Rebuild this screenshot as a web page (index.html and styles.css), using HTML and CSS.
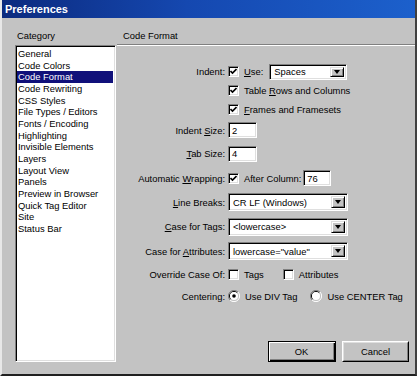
FILE: index.html
```html
<!DOCTYPE html>
<html>
<head>
<meta charset="utf-8">
<link rel="stylesheet" href="styles.css">
</head>
<body>
<div class="window">
  <div class="titlebar">Preferences</div>
  <div class="main">
    <div class="cat-col">
      <div class="cat-label">Category</div>
      <ul class="listbox">
        <li>General</li>
        <li>Code Colors</li>
        <li class="sel">Code Format</li>
        <li>Code Rewriting</li>
        <li>CSS Styles</li>
        <li>File Types / Editors</li>
        <li>Fonts / Encoding</li>
        <li>Highlighting</li>
        <li>Invisible Elements</li>
        <li>Layers</li>
        <li>Layout View</li>
        <li>Panels</li>
        <li>Preview in Browser</li>
        <li>Quick Tag Editor</li>
        <li>Site</li>
        <li>Status Bar</li>
      </ul>
    </div>
    <div class="panel">
      <div class="panel-head">Code Format</div>
      <div class="form">
        <div class="lbl r1"><span>Indent:</span></div>
        <div class="ctl r1">
          <span class="chk on"><svg viewBox="0 0 7 7" width="7" height="7"><path d="M0.5 3 L2.5 5 L6.5 1" fill="none" stroke="#000" stroke-width="1.6"/></svg></span>
          <span class="txt"><u>U</u>se:</span>
          <span class="select w-spaces"><span class="val">Spaces</span><span class="drop"><i></i></span></span>
        </div>

        <div class="lbl r2"></div>
        <div class="ctl r2">
          <span class="chk on"><svg viewBox="0 0 7 7" width="7" height="7"><path d="M0.5 3 L2.5 5 L6.5 1" fill="none" stroke="#000" stroke-width="1.6"/></svg></span>
          <span class="txt">Table <u>R</u>ows and Columns</span>
        </div>

        <div class="lbl r3"></div>
        <div class="ctl r3">
          <span class="chk on"><svg viewBox="0 0 7 7" width="7" height="7"><path d="M0.5 3 L2.5 5 L6.5 1" fill="none" stroke="#000" stroke-width="1.6"/></svg></span>
          <span class="txt"><u>F</u>rames and Framesets</span>
        </div>

        <div class="lbl r4"><span>Indent <u>S</u>ize:</span></div>
        <div class="ctl r4"><span class="input w-small">2</span></div>

        <div class="lbl r5"><span><u>T</u>ab Size:</span></div>
        <div class="ctl r5"><span class="input w-small">4</span></div>

        <div class="lbl r6"><span>Automatic <u>W</u>rapping:</span></div>
        <div class="ctl r6">
          <span class="chk on"><svg viewBox="0 0 7 7" width="7" height="7"><path d="M0.5 3 L2.5 5 L6.5 1" fill="none" stroke="#000" stroke-width="1.6"/></svg></span>
          <span class="txt">After Column:</span>
          <span class="input w-col">76</span>
        </div>

        <div class="lbl r7"><span><u>L</u>ine Breaks:</span></div>
        <div class="ctl r7"><span class="select w-wide"><span class="val">CR LF (Windows)</span><span class="drop"><i></i></span></span></div>

        <div class="lbl r8"><span><u>C</u>ase for Tags:</span></div>
        <div class="ctl r8"><span class="select w-wide"><span class="val">&lt;lowercase&gt;</span><span class="drop"><i></i></span></span></div>

        <div class="lbl r9"><span>Case for <u>A</u>ttributes:</span></div>
        <div class="ctl r9"><span class="select w-wide"><span class="val">lowercase="value"</span><span class="drop"><i></i></span></span></div>

        <div class="lbl r10"><span>Override Case Of:</span></div>
        <div class="ctl r10">
          <span class="chk"></span>
          <span class="txt">Tags</span>
          <span class="chk gap-chk"></span>
          <span class="txt">Attributes</span>
        </div>

        <div class="lbl r11"><span>Centering:</span></div>
        <div class="ctl r11">
          <span class="radio"><svg viewBox="0 0 12 12" width="12" height="12"><path d="M10 2 A5.5 5.5 0 0 0 2 10" fill="none" stroke="#808080"/><path d="M9.2 2.8 A4.5 4.5 0 0 0 2.8 9.2" fill="none" stroke="#000"/><path d="M2 10 A5.5 5.5 0 0 0 10 2" fill="none" stroke="#fff"/><circle cx="6" cy="6" r="4" fill="#fff"/><circle cx="6" cy="6" r="1.8" fill="#000"/></svg></span>
          <span class="txt">Use DIV Tag</span>
          <span class="radio gap-radio"><svg viewBox="0 0 12 12" width="12" height="12"><path d="M10 2 A5.5 5.5 0 0 0 2 10" fill="none" stroke="#808080"/><path d="M9.2 2.8 A4.5 4.5 0 0 0 2.8 9.2" fill="none" stroke="#000"/><path d="M2 10 A5.5 5.5 0 0 0 10 2" fill="none" stroke="#fff"/><circle cx="6" cy="6" r="4" fill="#fff"/></svg></span>
          <span class="txt">Use CENTER Tag</span>
        </div>
      </div>
      <div class="buttons">
        <span class="btn default"><span class="btn-in">OK</span></span>
        <span class="btn"><span class="btn-in">Cancel</span></span>
      </div>
    </div>
  </div>
</div>
</body>
</html>
```
FILE: styles.css
```css
html, body {
  margin: 0;
  padding: 0;
  background: #c3c3c3;
}
body {
  font-family: "Liberation Sans", Arial, sans-serif;
  font-size: 9.4px;
  color: #000;
}
.window {
  width: 417px;
  height: 376px;
  box-sizing: border-box;
  background: #c3c3c3;
  border-left: 2px solid #e8e8e8;
  border-right: 2px solid #404040;
  border-bottom: 2px solid #202020;
  display: flex;
  flex-direction: column;
  overflow: hidden;
}
.titlebar {
  height: 18px;
  line-height: 18px;
  background: linear-gradient(90deg, #0b2a7e 0%, #1548b0 45%, #1c60cc 100%);
  color: #fff;
  font-weight: bold;
  font-size: 11px;
  margin-left: -2px;
  padding-left: 5px;
}
.main {
  flex: 1;
  display: flex;
}
.cat-col {
  padding-left: 13px;
  padding-top: 12px;
  width: 101px;
}
.cat-label {
  height: 12px;
  line-height: 12px;
  padding-left: 2px;
}
.listbox {
  list-style: none;
  margin: 3px 0 0 0;
  width: 101px;
  height: 317px;
  box-sizing: border-box;
  background: #fff;
  border-top: 1px solid #808080;
  border-left: 1px solid #808080;
  border-bottom: 1px solid #fff;
  border-right: 1px solid #fff;
  box-shadow: inset 1px 1px 0 #000, inset -1px -1px 0 #dfdfdf;
  padding: 2px 2px 0 1px;
}
.listbox li {
  height: 11.67px;
  line-height: 11.67px;
  padding-left: 1px;
  white-space: nowrap;
}
.listbox li.sel {
  background: #10107a;
  color: #fff;
}
.panel {
  flex: 1;
  display: flex;
  flex-direction: column;
  padding-left: 1px;
}
.panel-head {
  margin-top: 12px;
  height: 12px;
  line-height: 12px;
  padding-left: 6px;
  padding-bottom: 2px;
  border-bottom: 1px solid #808080;
  box-shadow: 0 1px 0 #fff;
}
.form {
  margin-top: 17px;
  display: grid;
  grid-template-columns: 108px 1fr;
  grid-template-rows: 19px 19px 19px 22px 25px 24px 24px 25px 24px 23px 20px;
  column-gap: 3px;
}
.lbl {
  display: flex;
  align-items: center;
  justify-content: flex-end;
  white-space: nowrap;
}
.ctl {
  display: flex;
  align-items: center;
  white-space: nowrap;
}
.txt {
  margin-left: 5px;
}
.chk {
  width: 11px;
  height: 11px;
  box-sizing: border-box;
  background: #fff;
  border-top: 1px solid #808080;
  border-left: 1px solid #808080;
  border-bottom: 1px solid #fff;
  border-right: 1px solid #fff;
  box-shadow: inset 1px 1px 0 #000, inset -1px -1px 0 #dfdfdf;
  display: flex;
  align-items: center;
  justify-content: center;
  flex: none;
}
.chk svg {
  display: block;
}
.gap-chk {
  margin-left: 19px;
}
.radio {
  width: 12px;
  height: 12px;
  flex: none;
  display: block;
}
.radio svg {
  display: block;
}
.gap-radio {
  margin-left: 13px;
}
.select, .input {
  box-sizing: border-box;
  background: #fff;
  border-top: 1px solid #808080;
  border-left: 1px solid #808080;
  border-bottom: 1px solid #fff;
  border-right: 1px solid #fff;
  box-shadow: inset 1px 1px 0 #000, inset -1px -1px 0 #dfdfdf;
  display: flex;
  align-items: center;
  flex: none;
}
.input {
  height: 16px;
  padding-left: 3px;
}
.w-small {
  width: 29px;
}
.w-col {
  width: 28px;
  margin-left: 2px;
}
.select {
  height: 18px;
  padding: 2px;
}
.w-spaces {
  width: 78px;
  height: 16px;
  margin-left: 6px;
}
.w-wide {
  width: 120px;
}
.select .val {
  flex: 1;
  padding-left: 2px;
  overflow: hidden;
}
.drop {
  width: 14px;
  align-self: stretch;
  box-sizing: border-box;
  background: #c3c3c3;
  border-top: 1px solid #dfdfdf;
  border-left: 1px solid #dfdfdf;
  border-right: 1px solid #000;
  border-bottom: 1px solid #000;
  box-shadow: inset 1px 1px 0 #fff, inset -1px -1px 0 #808080;
  display: flex;
  align-items: center;
  justify-content: center;
}
.drop i {
  width: 0;
  height: 0;
  border-left: 3.5px solid transparent;
  border-right: 3.5px solid transparent;
  border-top: 4px solid #000;
}
.buttons {
  margin-top: 35px;
  display: flex;
  justify-content: flex-end;
  gap: 6px;
  padding-right: 6px;
}
.btn {
  box-sizing: border-box;
  height: 21px;
  width: 67px;
  border-top: 1px solid #fff;
  border-left: 1px solid #fff;
  border-right: 1px solid #000;
  border-bottom: 1px solid #000;
  display: flex;
}
.btn-in {
  flex: 1;
  display: flex;
  align-items: center;
  justify-content: center;
  border-right: 1px solid #808080;
  border-bottom: 1px solid #808080;
  border-top: 1px solid #dfdfdf;
  border-left: 1px solid #dfdfdf;
}
.btn.default {
  width: 68px;
  border: 1px solid #000;
  box-shadow: inset 1px 1px 0 #fff, inset -1px -1px 0 #000;
}
.btn.default .btn-in {
  margin: 1px;
  border-top: 0;
  border-left: 0;
}
```
